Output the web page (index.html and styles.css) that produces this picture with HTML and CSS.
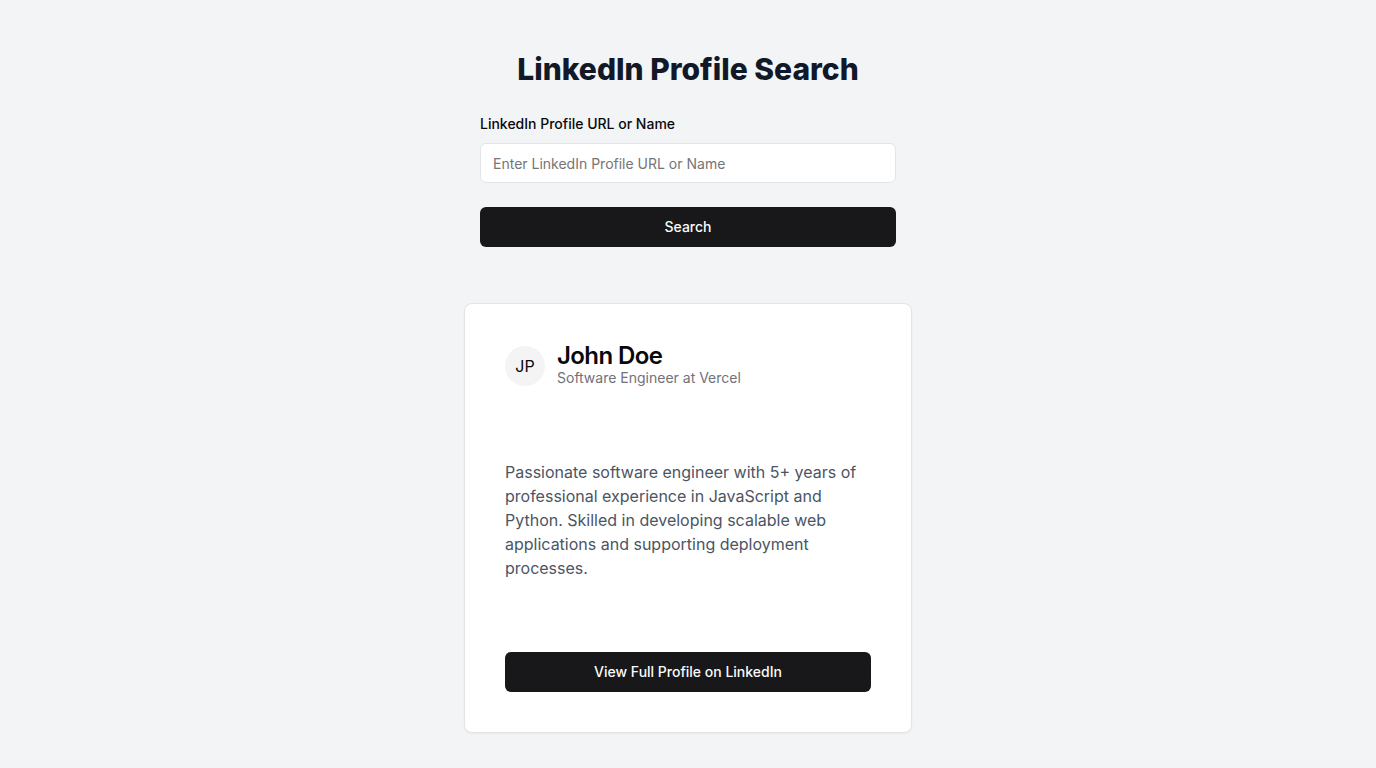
FILE: index.html
```html
<!DOCTYPE html>
<html lang="en">
<head>
<meta charset="utf-8">
<meta name="viewport" content="width=device-width, initial-scale=1">
<title>LinkedIn Profile Search</title>
<link rel="stylesheet" href="styles.css">
</head>
<body>
<main class="page">
  <section class="search">
    <h1 class="title">LinkedIn Profile Search</h1>
    <form class="form">
      <div class="field">
        <label class="label" for="profile">LinkedIn Profile URL or Name</label>
        <input class="input" id="profile" type="text" placeholder="Enter LinkedIn Profile URL or Name">
      </div>
      <button class="button" type="submit">Search</button>
    </form>
  </section>
  <article class="card">
    <header class="person">
      <span class="avatar">JP</span>
      <div>
        <h2 class="name">John Doe</h2>
        <p class="role">Software Engineer at Vercel</p>
      </div>
    </header>
    <p class="bio">Passionate software engineer with 5+ years of professional experience in JavaScript and Python. Skilled in developing scalable web applications and supporting deployment processes.</p>
    <button class="button" type="button">View Full Profile on LinkedIn</button>
  </article>
</main>
</body>
</html>
```
FILE: styles.css
```css
*, *::before, *::after {
  box-sizing: border-box;
}

body {
  margin: 0;
  background: #f3f4f6;
  color: #09090b;
  font-family: Inter, "Liberation Sans", sans-serif;
  font-size: 16px;
  line-height: 24px;
}

h1, h2, p {
  margin: 0;
}

.page {
  display: flex;
  flex-direction: column;
  align-items: center;
  gap: 56px;
  min-height: 100vh;
  padding: 51px 16px 35px;
}

.search {
  width: 100%;
  max-width: 416px;
}

.title {
  color: #111827;
  font-size: 30px;
  font-weight: 800;
  line-height: 36px;
  text-align: center;
}

.form {
  display: flex;
  flex-direction: column;
  gap: 24px;
  margin-top: 30px;
}

.field {
  display: flex;
  flex-direction: column;
  gap: 12px;
}

.label {
  font-size: 14px;
  font-weight: 500;
  line-height: 14px;
}

.input {
  width: 100%;
  height: 40px;
  padding: 8px 12px;
  border: 1px solid #e4e4e7;
  border-radius: 6px;
  background: #fff;
  color: inherit;
  font: inherit;
  font-size: 14px;
  line-height: 20px;
}

.input::placeholder {
  color: #757575;
  opacity: 1;
}

.button {
  width: 100%;
  height: 40px;
  padding: 8px 16px;
  border: 0;
  border-radius: 6px;
  background: #18181b;
  color: #fafafa;
  font: inherit;
  font-size: 14px;
  font-weight: 500;
  line-height: 20px;
  cursor: pointer;
}

.card {
  width: 100%;
  max-width: 448px;
  padding: 40px;
  border: 1px solid #e4e4e7;
  border-radius: 8px;
  background: #fff;
  box-shadow: 0 1px 2px rgba(0, 0, 0, 0.05);
}

.person {
  display: flex;
  align-items: center;
  gap: 12px;
}

.avatar {
  display: flex;
  align-items: center;
  justify-content: center;
  width: 40px;
  height: 40px;
  border-radius: 50%;
  background: #f4f4f5;
}

.name {
  font-size: 24px;
  font-weight: 600;
  line-height: 24px;
  letter-spacing: -0.025em;
}

.role {
  color: #71717a;
  font-size: 14px;
  line-height: 20px;
}

.bio {
  margin: 72px 0;
  color: #4b5563;
}
```
